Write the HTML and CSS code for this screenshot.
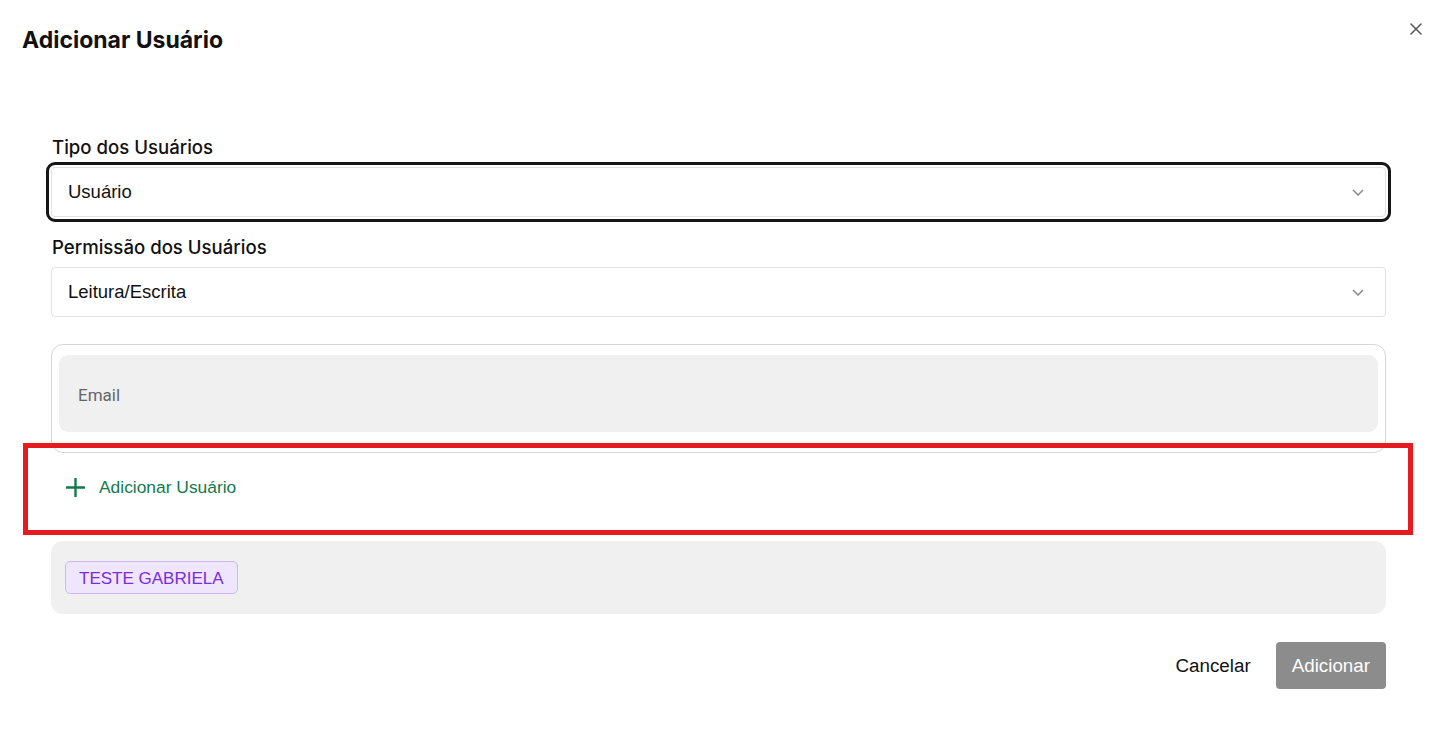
FILE: index.html
```html
<!DOCTYPE html>
<html lang="pt-BR">
<head>
<meta charset="utf-8">
<title>Adicionar Usuário</title>
<link rel="stylesheet" href="styles.css">
</head>
<body>
<div class="dialog">
  <header class="dialog-header">
    <h1 class="dialog-title">Adicionar Usuário</h1>
    <button class="close-btn" aria-label="Fechar">
      <svg width="12" height="12" viewBox="0 0 12 12"><path d="M1 1L11 11M11 1L1 11" stroke="#555" stroke-width="1.5" stroke-linecap="round"/></svg>
    </button>
  </header>

  <div class="form">
    <label class="field-label">Tipo dos Usuários</label>
    <div class="select focused">
      <span class="select-value">Usuário</span>
      <svg class="chevron" width="12" height="7" viewBox="0 0 12 7"><path d="M1 1L6 6L11 1" fill="none" stroke="#888" stroke-width="1.5"/></svg>
    </div>

    <label class="field-label second">Permissão dos Usuários</label>
    <div class="select">
      <span class="select-value">Leitura/Escrita</span>
      <svg class="chevron" width="12" height="7" viewBox="0 0 12 7"><path d="M1 1L6 6L11 1" fill="none" stroke="#888" stroke-width="1.5"/></svg>
    </div>

    <div class="email-box">
      <div class="email-input"><span class="placeholder">Email</span></div>
    </div>

    <div class="add-row">
      <svg class="plus" width="21" height="21" viewBox="0 0 21 21"><path d="M10.5 1V20M1 10.5H20" stroke="#137a4a" stroke-width="2.4"/></svg>
      <span class="add-text">Adicionar Usuário</span>
    </div>

    <div class="tags-box">
      <span class="tag">TESTE GABRIELA</span>
    </div>

    <div class="footer">
      <button class="btn-cancel">Cancelar</button>
      <button class="btn-primary">Adicionar</button>
    </div>
  </div>

  <div class="highlight"></div>
</div>
</body>
</html>
```

FILE: styles.css
```css
* { box-sizing: border-box; }
html, body { margin: 0; padding: 0; background: #fff; }
body { width: 1435px; height: 741px; overflow: hidden; }

.dialog { position: relative; }

.dialog-header {
  display: flex;
  justify-content: space-between;
  align-items: flex-start;
  padding: 23px 13px 0 22px;
}
.dialog-title {
  margin: 3px 0 0 0;
  font-family: Inter, "Liberation Sans", sans-serif;
  font-weight: 700;
  font-size: 23px;
  line-height: 28px;
  color: #111;
}
.close-btn {
  border: 0;
  background: none;
  padding: 0;
  width: 12px;
  height: 12px;
  display: block;
  cursor: pointer;
}
.close-btn svg { display: block; }

.form {
  padding: 81px 49px 0 51px;
  display: flex;
  flex-direction: column;
}
.field-label {
  display: block;
  font-family: Inter, "Liberation Sans", sans-serif;
  font-weight: 500;
  font-size: 18.6px;
  line-height: 24px;
  color: #111;
  margin-left: 1px;
  margin-bottom: 8px;
}
.field-label.second { margin-top: 18px; }

.select {
  height: 50px;
  border: 1px solid #e2e2e2;
  border-radius: 4px;
  display: flex;
  align-items: center;
  justify-content: space-between;
  padding: 0 21px 0 16px;
  font-family: "Liberation Sans", Arial, sans-serif;
  font-size: 18.5px;
  color: #111;
}
.select.focused {
  outline: 3px solid #161616;
  outline-offset: 2px;
}
.chevron { display: block; }

.email-box {
  margin-top: 27px;
  border: 1px solid #d6d6d6;
  border-radius: 12px;
  padding: 10px 7px 20px 7px;
}
.email-input {
  height: 77px;
  background: #f0f0f0;
  border-radius: 9px;
  display: flex;
  align-items: center;
  padding-left: 19px;
}
.placeholder {
  font-family: Roboto, "Liberation Sans", sans-serif;
  font-size: 17px;
  color: #666;
  padding-top: 2px;
}

.add-row {
  height: 68px;
  display: flex;
  align-items: center;
  gap: 13px;
  padding-left: 14px;
}
.plus { display: block; }
.add-text {
  font-family: "Liberation Sans", Arial, sans-serif;
  font-size: 17.4px;
  color: #137a4a;
  padding-top: 1px;
}

.tags-box {
  margin-top: 20px;
  height: 73px;
  background: #f0f0f0;
  border-radius: 12px;
  padding: 20px 14px 0 14px;
  display: flex;
  align-items: flex-start;
}
.tag {
  display: inline-block;
  height: 33px;
  line-height: 33px;
  padding: 0 13px;
  border: 1px solid #cfb6f8;
  background: #efe5fd;
  border-radius: 5px;
  font-family: "Liberation Sans", Arial, sans-serif;
  font-size: 17px;
  color: #7b2ce0;
}

.footer {
  margin-top: 28px;
  display: flex;
  justify-content: flex-end;
  align-items: center;
  gap: 25px;
}
.btn-cancel {
  border: 0;
  background: none;
  padding: 0;
  font-family: "Liberation Sans", Arial, sans-serif;
  font-size: 18.8px;
  color: #111;
  cursor: pointer;
}
.btn-primary {
  border: 0;
  height: 47px;
  padding: 0 16px;
  background: #8c8c8c;
  border-radius: 4px;
  font-family: "Liberation Sans", Arial, sans-serif;
  font-size: 18.8px;
  color: #fff;
  cursor: pointer;
}

.highlight {
  position: absolute;
  left: 23px;
  top: 443px;
  width: 1390px;
  height: 92px;
  border: 5px solid #e51b1f;
  pointer-events: none;
}
```
